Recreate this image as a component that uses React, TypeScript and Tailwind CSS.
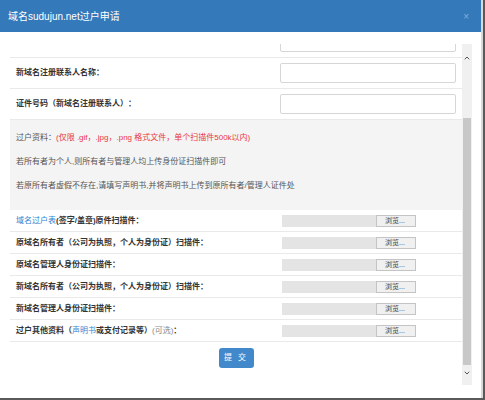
import { ChevronUp, ChevronDown } from 'lucide-react'

const font = { fontFamily: '"Liberation Sans", "Noto Sans CJK SC", sans-serif' }

function FileRow({ children }: { children: React.ReactNode }) {
  return (
    <div className="h-[22px] flex items-center border-b border-[#e9e9e9] pl-[6px]">
      <div className="flex-1 text-[8px] font-bold text-[#333] whitespace-nowrap [text-spacing-trim:space-all]">{children}</div>
      <div className="w-[94px] h-[12px] bg-[#e4e4e4]" />
      <div className="w-[40px] h-[12px] mr-[46px] border border-[#c4c4c4] bg-[#f0f0f0] text-[7px] leading-[10px] text-[#444] pl-[8px]">浏览...</div>
    </div>
  )
}

function InputRow({ label }: { label: string }) {
  return (
    <div className="h-[31px] flex items-center border-b border-[#e9e9e9] pl-[6px]">
      <div className="flex-1 text-[8px] font-bold text-[#333] [text-spacing-trim:space-all]">{label}</div>
      <div className="w-[176px] h-[20px] mr-[6px] border border-[#d6d6d6] rounded-[2px] bg-white" />
    </div>
  )
}

export default function App() {
  return (
    <div className="w-[485px] h-[400px] bg-[#5a5a5a] overflow-hidden" style={font}>
      <div className="w-[483px] h-[398px] flex flex-col bg-white border-r-2 border-[#d8d8d8]">
        <div className="h-[32px] bg-[#3479b9] flex items-center justify-between px-[8px]">
          <span className="text-[10px] text-white">域名sudujun.net过户申请</span>
          <span className="text-[10px] text-[#86aed6] mr-[4px]">×</span>
        </div>
        <div className="pt-[12px] flex">
          <div className="w-[452px] h-[341px] ml-[10px] overflow-hidden">
            <div className="-mt-[17px]">
              <div className="h-[31px] flex items-center border-b border-[#e9e9e9]">
                <div className="flex-1" />
                <div className="w-[176px] h-[20px] mr-[6px] border border-[#d6d6d6] rounded-[2px]" />
              </div>
              <InputRow label="新域名注册联系人名称：" />
              <InputRow label="证件号码（新域名注册联系人）：" />
              <div className="bg-[#f4f4f4] pt-[6px] pb-[12px] pl-[6px] text-[8px] leading-[24px] text-[#555]">
                <p>
                  过户资料：<span className="text-[#e8383d]">(仅限 .gif，.jpg，.png 格式文件，单个扫描件500k以内)</span>
                </p>
                <p>若所有者为个人,则所有者与管理人均上传身份证扫描件即可</p>
                <p>若原所有者虚假不存在,请填写声明书,并将声明书上传到原所有者/管理人证件处</p>
              </div>
              <FileRow>
                <span className="text-[#2f7fd0] font-normal">域名过户表</span>(签字/盖章)原件扫描件：
              </FileRow>
              <FileRow>原域名所有者（公司为执照，个人为身份证）扫描件：</FileRow>
              <FileRow>原域名管理人身份证扫描件：</FileRow>
              <FileRow>新域名所有者（公司为执照，个人为身份证）扫描件：</FileRow>
              <FileRow>新域名管理人身份证扫描件：</FileRow>
              <FileRow>
                过户其他资料（<span className="text-[#2f7fd0] font-normal">声明书</span>或支付记录等）
                <span className="text-[#888] font-normal">(可选)</span>：
              </FileRow>
              <div className="flex justify-center pt-[6px]">
                <button className="w-[35px] h-[20px] rounded-[3px] bg-[#4289cc] text-white text-[8px] tracking-[2px]">提 交</button>
              </div>
            </div>
          </div>
          <div className="w-[10px] h-[341px] bg-[#f0f0f0] flex flex-col items-center">
            <ChevronUp className="w-[8px] h-[8px] mt-[10px] text-[#555]" strokeWidth={3} />
            <div className="w-[8px] h-[247px] mt-[56px] bg-[#c8c8c8]" />
            <ChevronDown className="w-[8px] h-[8px] mt-[4px] text-[#555]" strokeWidth={3} />
          </div>
        </div>
      </div>
    </div>
  )
}
